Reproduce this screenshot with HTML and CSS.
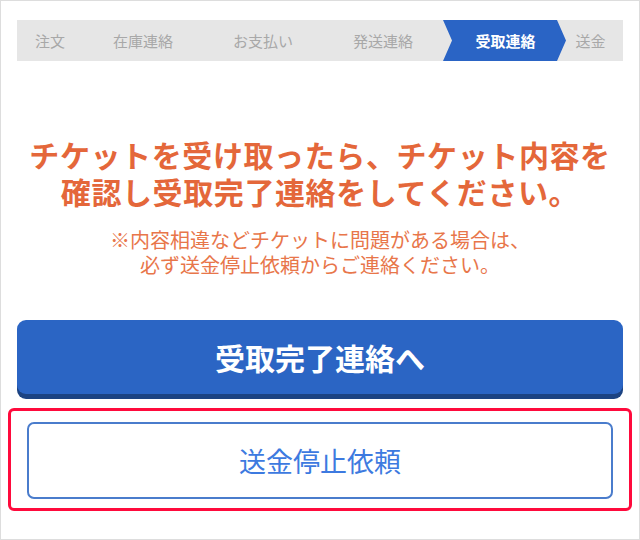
FILE: index.html
```html
<!DOCTYPE html>
<html lang="ja">
<head>
  <meta charset="UTF-8" />
  <meta name="viewport" content="width=device-width, initial-scale=1.0"/>
  <title>受取連絡</title>
  <link rel="stylesheet" href="styles.css">
</head>
<body>
  <div class="frame">
    <ol class="steps">
      <li class="step step-first">注文</li>
      <li class="step">在庫連絡</li>
      <li class="step">お支払い</li>
      <li class="step">発送連絡</li>
      <li class="step active">受取連絡</li>
      <li class="step step-last">送金</li>
    </ol>

    <div class="message">
      <h2>チケットを受け取ったら、チケット内容を<br>確認し受取完了連絡をしてください。</h2>
      <p>※内容相違などチケットに問題がある場合は、<br>必ず送金停止依頼からご連絡ください。</p>
    </div>

    <button type="button" class="btn-primary">受取完了連絡へ</button>

    <div class="highlight">
      <button type="button" class="btn-outline">送金停止依頼</button>
    </div>
  </div>
</body>
</html>
```

FILE: styles.css
```css
body {
  margin: 0;
  font-family: "Noto Sans CJK JP", "Noto Sans", sans-serif;
  background-color: #ffffff;
}

.frame {
  width: 640px;
  height: 540px;
  box-sizing: border-box;
  border: 1px solid #dddddd;
  padding: 19px 16px 0;
}

.steps {
  list-style: none;
  margin: 0;
  padding: 0;
  display: flex;
  height: 41px;
  background-color: #e6e6e6;
}

.step {
  width: 120px;
  flex: none;
  display: flex;
  align-items: center;
  justify-content: center;
  font-size: 15px;
  color: #a8a8a8;
}

.step-first {
  width: 66px;
}

.step-last {
  flex: 1;
  width: auto;
  padding-right: 8px;
}

.step.active {
  width: 123px;
  background-color: #2a64c5;
  color: #ffffff;
  font-weight: 700;
  clip-path: polygon(0 0, calc(100% - 9px) 0, 100% 50%, calc(100% - 9px) 100%, 0 100%, 9px 50%);
  padding-left: 2px;
  box-sizing: border-box;
}

.message {
  margin-top: 75px;
  text-align: center;
  color: #e4673a;
}

.message h2 {
  margin: 0;
  font-size: 30px;
  line-height: 37px;
  letter-spacing: 0.6px;
  font-weight: 700;
}

.message p {
  margin: 17px 0 0;
  font-size: 20px;
  line-height: 25px;
  color: #e8764a;
}

.btn-primary {
  display: block;
  width: 100%;
  height: 74px;
  margin-top: 43px;
  border: none;
  border-radius: 9px;
  background-color: #2b65c4;
  box-shadow: 0 5px 0 #1c4382;
  color: #ffffff;
  font-family: inherit;
  font-size: 30px;
  font-weight: 700;
  cursor: pointer;
}

.highlight {
  margin: 14px -9px 0;
  padding: 11px 16px 9px;
  border: 3px solid #ff0a3c;
  border-radius: 6px;
}

.btn-outline {
  display: block;
  width: 100%;
  height: 77px;
  border: 2px solid #4a7ccc;
  border-radius: 7px;
  background-color: #ffffff;
  color: #3d7ae0;
  font-family: inherit;
  font-size: 27px;
  cursor: pointer;
}
```
